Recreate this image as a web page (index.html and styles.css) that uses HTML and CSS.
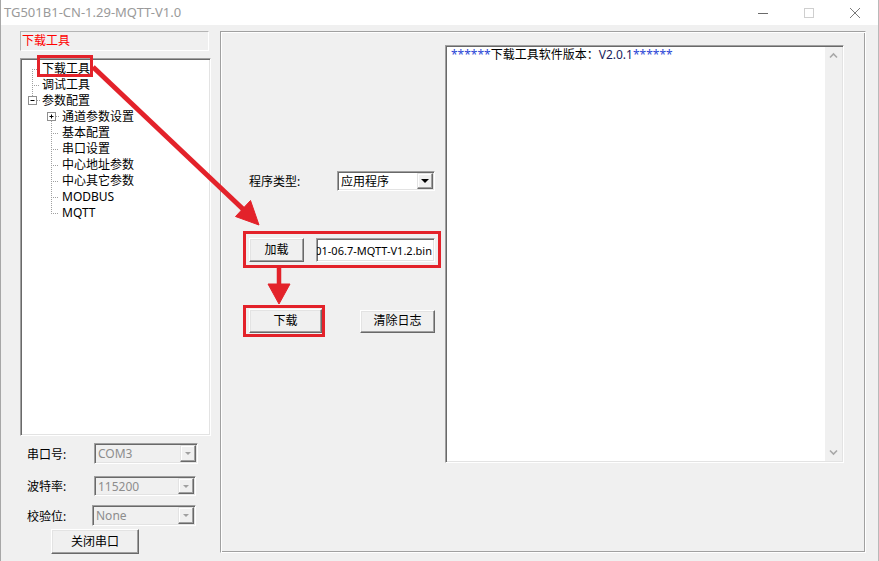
FILE: index.html
```html
<!DOCTYPE html>
<html lang="zh-CN">
<head>
<meta charset="utf-8">
<title>TG501B1-CN-1.29-MQTT-V1.0</title>
<link rel="stylesheet" href="styles.css">
</head>
<body>
<div class="window">
  <div class="titlebar">
    <span class="title">TG501B1-CN-1.29-MQTT-V1.0</span>
    <div class="caption-btns">
      <span class="cap"><svg width="12" height="12" viewBox="0 0 12 12"><path d="M1 6.5h10" stroke="#6a6a6a" stroke-width="1"/></svg></span>
      <span class="cap"><svg width="12" height="12" viewBox="0 0 12 12"><rect x="1.5" y="1.5" width="9" height="9" fill="none" stroke="#cfcfcf"/></svg></span>
      <span class="cap"><svg width="12" height="12" viewBox="0 0 12 12"><path d="M1 1l10 10M11 1L1 11" stroke="#7a7a7a" stroke-width="1"/></svg></span>
    </div>
  </div>
  <div class="client">
    <aside class="left">
      <div class="tab-label">下载工具</div>
      <div class="tree">
        <div class="node l1 first"><span class="guide"></span><span class="txt">下载工具</span></div>
        <div class="node l1 mid"><span class="guide"></span><span class="txt">调试工具</span></div>
        <div class="node l1 last"><span class="guide"><svg width="15" height="16" viewBox="0 0 15 16"><rect x="1.5" y="3.5" width="8" height="8" fill="#fff" stroke="#8f8f8f"/><path d="M3.5 7.5h4" stroke="#000"/><path d="M10 7.5h4" stroke="#a0a0a0" stroke-dasharray="1 1"/></svg></span><span class="txt">参数配置</span></div>
        <div class="node l2 first"><span class="guide"><svg width="16" height="16" viewBox="0 0 16 16"><rect x="1.5" y="3.5" width="8" height="8" fill="#fff" stroke="#8f8f8f"/><path d="M3.5 7.5h4M5.5 5.5v4" stroke="#000"/><path d="M10 7.5h4" stroke="#a0a0a0" stroke-dasharray="1 1"/></svg></span><span class="txt">通道参数设置</span></div>
        <div class="node l2 mid"><span class="guide"></span><span class="txt">基本配置</span></div>
        <div class="node l2 mid"><span class="guide"></span><span class="txt">串口设置</span></div>
        <div class="node l2 mid"><span class="guide"></span><span class="txt">中心地址参数</span></div>
        <div class="node l2 mid"><span class="guide"></span><span class="txt">中心其它参数</span></div>
        <div class="node l2 mid"><span class="guide"></span><span class="txt">MODBUS</span></div>
        <div class="node l2 end"><span class="guide"></span><span class="txt">MQTT</span></div>
      </div>
      <div class="field f-port"><span class="flabel">串口号:</span><div class="combo disabled"><span class="cval">COM3</span><span class="drop"></span></div></div>
      <div class="field f-baud"><span class="flabel">波特率:</span><div class="combo disabled"><span class="cval">115200</span><span class="drop"></span></div></div>
      <div class="field f-parity"><span class="flabel">校验位:</span><div class="combo disabled"><span class="cval">None</span><span class="drop"></span></div></div>
      <button class="btn btn-close">关闭串口</button>
    </aside>
    <section class="panel">
      <div class="controls">
        <div class="row r-type"><span class="lbl">程序类型:</span><div class="combo c-type"><span class="cval">应用程序</span><span class="drop"></span></div></div>
        <div class="row r-load"><button class="btn btn-load">加载</button><div class="edit"><span class="edit-text">01-06.7-MQTT-V1.2.bin</span></div></div>
        <div class="row r-down"><button class="btn btn-down">下载</button><button class="btn btn-clear">清除日志</button></div>
      </div>
      <div class="log">
        <div class="log-text"><span class="ast">******</span>下载工具软件版本：<span class="ver">V2.0.1</span><span class="ast">******</span></div>
        <div class="vscroll">
          <span class="sarrow"><svg width="17" height="17" viewBox="0 0 17 17"><path d="M5 10.5l3.5-3.5 3.5 3.5" fill="none" stroke="#a8a8a8" stroke-width="1.6"/></svg></span>
          <span class="sarrow"><svg width="17" height="17" viewBox="0 0 17 17"><path d="M5 6.5l3.5 3.5 3.5-3.5" fill="none" stroke="#a8a8a8" stroke-width="1.6"/></svg></span>
        </div>
      </div>
    </section>
  </div>
  <svg class="annot" width="879" height="561" viewBox="0 0 879 561">
    <g fill="none" stroke="#e3222a" stroke-width="3">
      <rect x="38.5" y="56.5" width="53" height="19"/>
      <rect x="244.5" y="232.5" width="195" height="34"/>
      <rect x="244.5" y="306.5" width="79" height="29"/>
    </g>
    <g fill="#e3222a" stroke="#e3222a">
      <path d="M93 67 L245 211" stroke-width="5" fill="none"/>
      <path d="M259 225 L235.5 216.5 L250.5 200.5 Z" stroke-width="1"/>
      <path d="M279 268 V288" stroke-width="4.5" fill="none"/>
      <path d="M279 304 L268 284 L290 284 Z" stroke-width="1"/>
    </g>
  </svg>
</div>
</body>
</html>
```

FILE: styles.css
```css
* { box-sizing: border-box; }
html, body { margin: 0; padding: 0; }
body {
  width: 879px;
  height: 561px;
  overflow: hidden;
  background: #e6e6e6;
  font-family: "Noto Sans", "Noto Sans CJK SC", sans-serif;
  font-size: 12px;
  color: #000;
}
.window {
  position: relative;
  width: 879px;
  height: 561px;
  background: #f0f0f0;
  border-left: 1px solid #a7a7a7;
  border-right: 1px solid #b9b9b9;
  display: flex;
  flex-direction: column;
}
.titlebar {
  height: 25px;
  flex: none;
  background: #fff;
  display: flex;
  align-items: center;
}
.title {
  margin-left: 3px;
  font-size: 13px;
  color: #9a9a9a;
  line-height: 25px;
}
.caption-btns { margin-left: auto; display: flex; height: 25px; }
.cap { width: 46px; height: 25px; display: flex; align-items: center; justify-content: center; }

.client { flex: 1; display: flex; align-items: flex-start; }

/* left column */
.left {
  width: 219px;
  flex: none;
  padding-left: 19px;
  display: flex;
  flex-direction: column;
  align-items: flex-start;
}
.tab-label {
  margin-top: 6px;
  width: 189px;
  height: 20px;
  border: 1px solid;
  border-color: #b4b4b4 #fff #fff #b4b4b4;
  color: #f00;
  padding-left: 1px;
  line-height: 18px;
  font-size: 12px;
}
.tree {
  margin-top: 7px;
  width: 191px;
  height: 378px;
  background: #fff;
  border: 1px solid;
  border-color: #a0a0a0 #fff #fff #a0a0a0;
  box-shadow: inset 1px 1px #696969, inset -1px -1px #e3e3e3;
  padding-top: 2px;
}
.node { display: flex; height: 16px; line-height: 16px; white-space: nowrap; }
.guide {
  flex: none;
  width: 15px;
  height: 16px;
  background-repeat: no-repeat;
}
.guide svg { display: block; }
.l1 .guide { margin-left: 6px; }
.l2 .guide { margin-left: 25px; width: 16px; }
.l1.first .guide,
.l1.mid .guide,
.l2.mid .guide,
.l2.end .guide {
  background-image:
    repeating-linear-gradient(90deg, #a0a0a0 0 1px, transparent 1px 2px),
    repeating-linear-gradient(180deg, #a0a0a0 0 1px, transparent 1px 2px);
}
.l1.first .guide { background-size: 8px 1px, 1px 8px; background-position: 5px 8px, 5px 8px; }
.l1.mid .guide, .l2.mid .guide { background-size: 8px 1px, 1px 16px; background-position: 5px 8px, 5px 0; }
.l2.end .guide { background-size: 8px 1px, 1px 9px; background-position: 5px 8px, 5px 0; }
.l1.last .guide {
  background-image: repeating-linear-gradient(180deg, #a0a0a0 0 1px, transparent 1px 2px);
  background-size: 1px 3px;
  background-position: 5px 0;
}
.l2.first .guide {
  background-image: repeating-linear-gradient(180deg, #a0a0a0 0 1px, transparent 1px 2px);
  background-size: 1px 4px;
  background-position: 5px 12px;
}
.txt { font-size: 12px; }

.field { display: flex; align-items: center; padding-left: 7px; }
.flabel { font-size: 12px; }
.f-port { margin-top: 7px; }
.f-port .flabel { width: 67px; }
.f-port .combo { width: 104px; height: 21px; }
.f-baud { margin-top: 12px; }
.f-baud .flabel { width: 67px; }
.f-baud .combo { width: 102px; height: 20px; }
.f-parity { margin-top: 9px; }
.f-parity .flabel { width: 65px; }
.f-parity .combo { width: 104px; height: 21px; }

.combo {
  display: flex;
  align-items: stretch;
  background: #fff;
  border: 1px solid;
  border-color: #a0a0a0 #fff #fff #a0a0a0;
  box-shadow: inset 1px 1px #696969, inset -1px -1px #e3e3e3;
  padding: 1px;
}
.cval { flex: 1; padding-left: 2px; display: flex; align-items: center; font-size: 12px; overflow: hidden; white-space: nowrap; }
.combo.disabled { background: #f0f0f0; }
.combo.disabled .cval { color: #8d8d8d; }
.drop {
  width: 16px;
  flex: none;
  background: #f0f0f0;
  border: 1px solid;
  border-color: #e3e3e3 #696969 #696969 #e3e3e3;
  box-shadow: inset -1px -1px #a0a0a0, inset 1px 1px #fff;
  display: flex;
  align-items: center;
  justify-content: center;
}
.drop::after {
  content: "";
  width: 0;
  height: 0;
  border-top: 4px solid #000;
  border-left: 4px solid transparent;
  border-right: 4px solid transparent;
}
.combo.disabled .drop::after { border-top-color: #a0a0a0; border-left-width: 3.5px; border-right-width: 3.5px; border-top-width: 3.5px; }

.btn {
  font-family: inherit;
  font-size: 12px;
  color: #000;
  background: #f0f0f0;
  border: 1px solid;
  border-color: #fff #696969 #696969 #fff;
  box-shadow: inset -1px -1px #a0a0a0, inset 1px 1px #e3e3e3;
  padding: 0;
  margin: 0;
  line-height: 1;
}
.btn-close { margin-top: 3px; margin-left: 31px; width: 88px; height: 25px; }

/* right panel */
.panel {
  margin-top: 6px;
  width: 646px;
  height: 522px;
  flex: none;
  border: 1px solid;
  border-color: #a0a0a0 #fff #fff #a0a0a0;
  box-shadow: inset 1px 1px #fff, inset -1px -1px #a0a0a0;
  display: flex;
  align-items: flex-start;
}
.controls { width: 224px; flex: none; padding-left: 28px; display: flex; flex-direction: column; }
.row { display: flex; align-items: center; }
.r-type { margin-top: 139px; height: 20px; }
.lbl { width: 88px; font-size: 12px; }
.c-type { width: 98px; height: 20px; }
.r-load { margin-top: 47px; height: 24px; }
.btn-load { width: 55px; height: 24px; }
.edit {
  margin-left: 12px;
  width: 119px;
  height: 24px;
  background: #fff;
  border: 1px solid;
  border-color: #a0a0a0 #fff #fff #a0a0a0;
  box-shadow: inset 1px 1px #696969, inset -1px -1px #e3e3e3;
  display: flex;
  justify-content: flex-end;
  align-items: center;
  overflow: hidden;
  padding-right: 2px;
}
.edit-text { white-space: nowrap; font-size: 11px; flex: none; }
.r-down { margin-top: 47px; height: 24px; }
.btn-down { width: 73px; height: 24px; }
.btn-clear { margin-left: 38px; width: 75px; height: 23px; }

.log {
  margin-top: 13px;
  width: 399px;
  height: 418px;
  flex: none;
  display: flex;
  background: #fff;
  border: 1px solid;
  border-color: #a0a0a0 #fff #fff #a0a0a0;
  box-shadow: inset 1px 1px #696969, inset -1px -1px #e3e3e3;
  padding: 1px;
}
.log-text {
  flex: 1;
  padding-left: 4px;
  line-height: 15px;
  font-size: 12px;
  white-space: nowrap;
}
.ast { color: #2b46d6; }
.ver { color: #1c1c5c; }
.vscroll {
  width: 17px;
  flex: none;
  background: #f0f0f0;
  display: flex;
  flex-direction: column;
  justify-content: space-between;
}
.sarrow { width: 17px; height: 17px; display: block; }
.sarrow svg { display: block; }

.annot { position: absolute; left: -1px; top: 0; pointer-events: none; }
```
